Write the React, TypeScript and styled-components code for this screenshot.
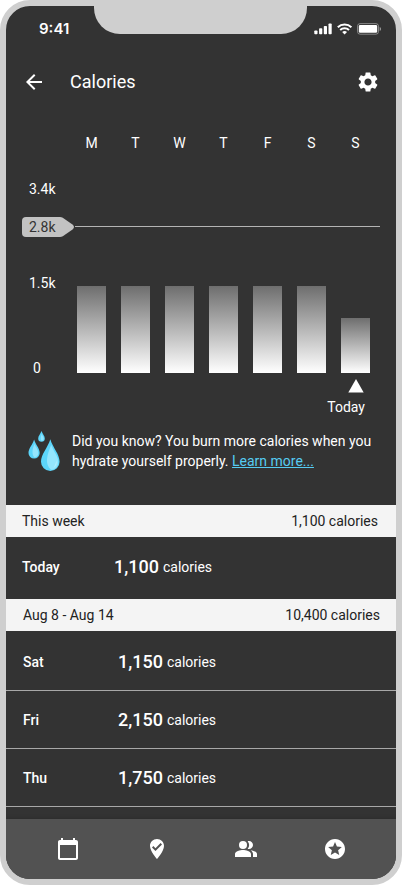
import React from 'react';
import styled, { createGlobalStyle } from 'styled-components';
import {
  MdArrowBack,
  MdCalendarToday,
  MdPeopleAlt,
  MdSettings,
  MdStars,
  MdWhereToVote,
} from 'react-icons/md';

const GlobalStyle = createGlobalStyle`
  *, *::before, *::after { box-sizing: border-box; }
  body { margin: 0; background: #fff; }
  h1, h2, p, ul { margin: 0; padding: 0; }
`;

const Phone = styled.div`
  display: flex;
  flex-direction: column;
  min-height: 100vh;
  border: 6px solid #cfcfcf;
  border-radius: 30px;
  background: #333;
  color: #fff;
  font-family: Roboto, sans-serif;
  font-size: 14px;
  line-height: 20px;
  overflow: hidden;
`;

const StatusBar = styled.div`
  display: grid;
  grid-template-columns: 88px 1fr 89px;
  height: 46px;
`;

const Time = styled.time`
  align-self: center;
  padding-left: 33px;
  font: 600 15px/20px Inter, sans-serif;
`;

const Notch = styled.div`
  height: 28px;
  border-radius: 0 0 26px 26px;
  background: #cfcfcf;
`;

const StatusIcons = styled.div`
  align-self: center;
  justify-self: end;
  display: flex;
  align-items: center;
  gap: 4px;
  padding-right: 15px;

  svg { display: block; }
`;

const Header = styled.header`
  display: flex;
  align-items: center;
  height: 60px;
  padding: 0 16px;
`;

const IconButton = styled.button`
  display: flex;
  padding: 0;
  border: 0;
  background: none;
  color: inherit;
  font-size: 24px;
  cursor: pointer;
`;

const Title = styled.h1`
  flex: 1;
  margin-left: 24px;
  font-size: 18px;
  font-weight: 400;
  line-height: 24px;
`;

const Chart = styled.section`
  display: flex;
  flex-direction: column;
  padding: 21px 16px 0;
`;

const PlotRow = styled.div`
  display: flex;
`;

const Axis = styled.div`
  display: flex;
  flex-direction: column;
  justify-content: space-between;
  width: 55px;
  padding-left: 7px;
`;

const Zero = styled.span`
  padding-left: 4px;
`;

const Columns = styled.div`
  flex: 1;
  display: grid;
  grid-template-columns: repeat(7, 1fr);
  gap: 15px;
  padding-right: 10px;
  text-align: center;
`;

const Bars = styled(Columns)`
  align-items: end;
  height: 105px;
  padding-bottom: 5px;
`;

const Bar = styled.div<{ $value: number }>`
  height: ${({ $value }) => $value}%;
  background: linear-gradient(#6e6e6e, #fff);
`;

const TopLabel = styled.div`
  margin-top: 26px;
  padding-left: 7px;
`;

const Goal = styled.div`
  display: flex;
  align-items: center;
  margin: 18px 0 36px;
`;

const GoalTag = styled.div`
  position: relative;
  width: 52px;
  height: 20px;
  padding-left: 7px;
  color: #333;

  svg { position: absolute; inset: 0; }
  span { position: relative; }
`;

const GoalLine = styled.div`
  flex: 1;
  height: 2px;
  margin-left: 1px;
  border-top: 1px solid #b4b4b4;
`;

const Marker = styled.div`
  display: flex;
  flex-direction: column;
  align-items: flex-end;
  gap: 4px;
  padding-right: 15px;

  svg { display: block; }
`;

const Tip = styled.aside`
  display: flex;
  gap: 12px;
  padding: 14px 16px 33px 22px;
`;

const DropsIcon = styled.svg`
  flex: none;
  display: block;
`;

const TipLink = styled.a`
  color: #56ccf2;
  text-decoration: underline;
`;

const SectionBar = styled.div<{ $current?: boolean }>`
  display: flex;
  align-items: center;
  justify-content: space-between;
  height: 32px;
  padding: ${({ $current }) => ($current ? '0 18px 0 16px' : '0 16px 0 17px')};
  background: #f4f4f4;
  color: #222;
`;

const SectionTitle = styled.h2`
  font: inherit;
`;

const Days = styled.ul<{ $current?: boolean }>`
  && { padding: ${({ $current }) => ($current ? '0 0 2px' : '2px 0 0')}; }
  list-style: none;
`;

const Day = styled.li<{ $divided?: boolean }>`
  display: flex;
  align-items: center;
  height: ${({ $divided }) => ($divided ? 58 : 60)}px;
  padding-left: ${({ $divided }) => ($divided ? 17 : 16)}px;
  border-bottom: ${({ $divided }) => ($divided ? '1px solid #a8a8a8' : '0')};
`;

const DayName = styled.span<{ $wide?: boolean }>`
  width: ${({ $wide }) => ($wide ? 95 : 92)}px;
  font-weight: 500;
`;

const Amount = styled.strong`
  margin-right: 4px;
  font-size: 18px;
  font-weight: 500;
`;

const Nav = styled.nav`
  display: flex;
  align-items: center;
  justify-content: space-between;
  height: 60px;
  margin-top: auto;
  padding: 0 49px 0 50px;
  background: #525252;
  box-shadow: 0 -1px 4px rgba(0, 0, 0, 0.15);
`;

const week = [
  { day: 'M', value: 87 },
  { day: 'T', value: 87 },
  { day: 'W', value: 87 },
  { day: 'T', value: 87 },
  { day: 'F', value: 87 },
  { day: 'S', value: 87 },
  { day: 'S', value: 55 },
];

const lastWeek = [
  { day: 'Sat', calories: '1,150' },
  { day: 'Fri', calories: '2,150' },
  { day: 'Thu', calories: '1,750' },
];

function Signal() {
  return (
    <svg width="19" height="12" viewBox="0 0 19 12" fill="#fff" aria-hidden="true">
      <rect x="0.3" y="7.5" width="3.2" height="3.7" rx="0.8" />
      <rect x="5.1" y="5.3" width="3.2" height="5.9" rx="0.8" />
      <rect x="9.8" y="3" width="3.2" height="8.2" rx="0.8" />
      <rect x="14.5" y="0.5" width="3.2" height="10.7" rx="0.8" />
    </svg>
  );
}

function Wifi() {
  return (
    <svg width="16" height="12" viewBox="0 0 16 12" aria-hidden="true">
      <g fill="none" stroke="#fff" strokeWidth="2">
        <path d="M0.800 4.200a9.900 9.900 0 0 1 13.600 0" />
        <path d="M3.200 6.900a6.400 6.400 0 0 1 8.800 0" />
      </g>
      <path d="M5.200 9a3.600 3.600 0 0 1 4.800 0L7.600 11.500z" fill="#fff" />
    </svg>
  );
}

function Battery() {
  return (
    <svg width="24" height="12" viewBox="0 0 24 12" aria-hidden="true">
      <rect x="0.5" y="0.6" width="21" height="10.6" rx="2.6" fill="none" stroke="#fff" strokeOpacity="0.4" />
      <rect x="1.8" y="2" width="18.400" height="7.800" rx="1.4" fill="#fff" />
      <path d="M22.700 4v4c.8-.3 1.3-1.100 1.300-2S23.500 4.300 22.700 4z" fill="#fff" fillOpacity="0.5" />
    </svg>
  );
}

function Drops() {
  return (
    <DropsIcon width="32" height="41" viewBox="0 0 32 41" aria-hidden="true">
      <path d="M13.500 0c1 3 3.300 4.900 3.300 7.400a3.300 3.300 0 0 1-6.600 0C10.200 4.900 12.500 3 13.500 0z" fill="#5cd5fa" />
      <path d="M13.700 3c.8 2 2 3 2 4.600 0 1.400-.8 2.200-2 2.400-1.500-1.500-1-4.500 0-7z" fill="#94e5fd" />
      <path d="M6.100 8.600c1.600 5.300 5.600 8.900 5.600 13.400a5.600 5.600 0 0 1-11.200 0c0-4.500 4-8.100 5.600-13.400z" fill="#5cd5fa" />
      <path d="M6.500 13c1.400 3.300 3.800 6 3.800 9 0 2.400-1.500 4.200-3.800 4.400-3-2.900-2.300-8.400 0-13.400z" fill="#94e5fd" />
      <path d="M22.300 8.300c2.600 8.600 9.300 15 9.300 22.500a9.300 9.300 0 0 1-18.600 0c0-7.500 6.700-13.900 9.300-22.500z" fill="#5cd5fa" />
      <path d="M23.200 14c2.300 6.500 7.100 11 7.100 17 0 4.800-3.200 7.800-7.300 7.800-6.600-6-4-14.800.2-24.800z" fill="#94e5fd" />
      <path d="M28.500 29.500c.8 3.200-.5 6-3 7.400 1.300-2.200 2.200-4.400 3-7.400z" fill="#b6eefe" />
    </DropsIcon>
  );
}

export default function App() {
  return (
    <Phone>
      <GlobalStyle />
      <StatusBar>
        <Time>9:41</Time>
        <Notch />
        <StatusIcons>
          <Signal />
          <Wifi />
          <Battery />
        </StatusIcons>
      </StatusBar>

      <Header>
        <IconButton aria-label="Back"><MdArrowBack /></IconButton>
        <Title>Calories</Title>
        <IconButton aria-label="Settings"><MdSettings /></IconButton>
      </Header>

      <Chart>
        <PlotRow>
          <Axis />
          <Columns>
            {week.map(({ day }, i) => <span key={i}>{day}</span>)}
          </Columns>
        </PlotRow>
        <TopLabel>3.4k</TopLabel>
        <Goal>
          <GoalTag>
            <svg width="52" height="20" viewBox="0 0 52 20" aria-hidden="true">
              <path d="M4 0h34q1.500 0 2.800.8l9.700 6.700q3 2.500 0 5l-9.700 6.700q-1.300.8-2.800.8H4a4 4 0 0 1-4-4V4a4 4 0 0 1 4-4z" fill="#c2c2c2" />
            </svg>
            <span>2.8k</span>
          </GoalTag>
          <GoalLine />
        </Goal>
        <PlotRow>
          <Axis>
            <span>1.5k</span>
            <Zero>0</Zero>
          </Axis>
          <Bars>
            {week.map(({ value }, i) => <Bar key={i} $value={value} />)}
          </Bars>
        </PlotRow>
        <Marker>
          <svg width="17" height="15" viewBox="0 0 17 15" aria-hidden="true">
            <path d="M8 1L15.700 14.500H.3z" fill="#fff" />
          </svg>
          <span>Today</span>
        </Marker>
      </Chart>

      <Tip>
        <Drops />
        <p>
          Did you know? You burn more calories when you hydrate yourself properly.{' '}
          <TipLink href="#hydration">Learn more...</TipLink>
        </p>
      </Tip>

      <SectionBar $current>
        <SectionTitle>This week</SectionTitle>
        <span>1,100 calories</span>
      </SectionBar>
      <Days $current>
        <Day>
          <DayName>Today</DayName>
          <Amount>1,100</Amount>
          calories
        </Day>
      </Days>

      <SectionBar>
        <SectionTitle>Aug 8 - Aug 14</SectionTitle>
        <span>10,400 calories</span>
      </SectionBar>
      <Days>
        {lastWeek.map(({ day, calories }) => (
          <Day key={day} $divided>
            <DayName $wide>{day}</DayName>
            <Amount>{calories}</Amount>
            calories
          </Day>
        ))}
      </Days>

      <Nav>
        <IconButton aria-label="Calendar"><MdCalendarToday /></IconButton>
        <IconButton aria-label="Places"><MdWhereToVote /></IconButton>
        <IconButton aria-label="Friends"><MdPeopleAlt /></IconButton>
        <IconButton aria-label="Achievements"><MdStars /></IconButton>
      </Nav>
    </Phone>
  );
}
